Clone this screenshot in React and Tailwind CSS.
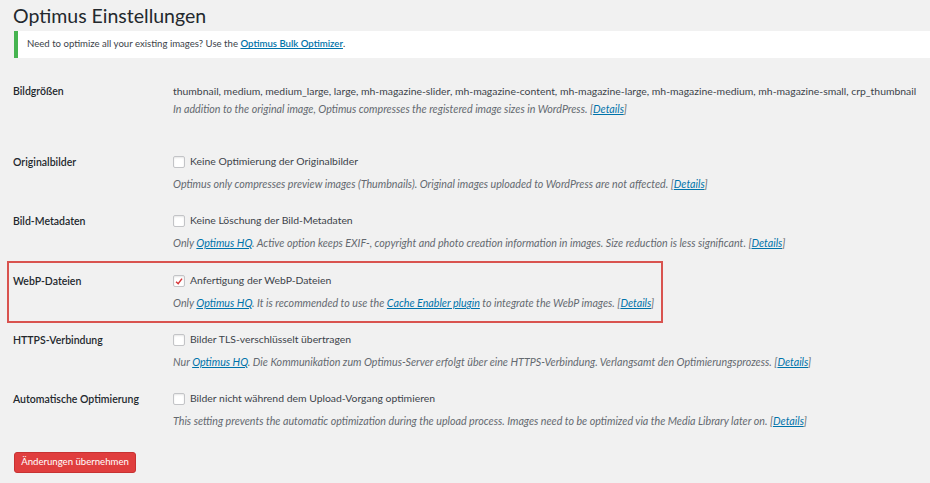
import React from 'react';

const font = { fontFamily: 'Lato, "Open Sans", Arial, sans-serif' };

function Link({ children }) {
    return <a className="text-[#0073aa] underline">{children}</a>;
}

function Details() {
    return (
        <span>
            [<Link>Details</Link>]
        </span>
    );
}

function Checkbox({ checked }) {
    return (
        <span className="w-[12px] h-[12px] bg-white border border-[#c3c4c7] rounded-[2px] shadow-[inset_0_1px_2px_rgba(0,0,0,0.1)] flex items-center justify-center shrink-0">
            {checked && (
                <svg viewBox="0 0 12 12" className="w-[11px] h-[11px]">
                    <path d="M2.5 6.2 L5 8.6 L9.6 2.6" fill="none" stroke="#d63638" strokeWidth="1.8" />
                </svg>
            )}
        </span>
    );
}

function Row({ label, children }) {
    return (
        <div className="flex">
            <div className="w-[160px] shrink-0 font-semibold text-[10.5px] text-[#23282d] leading-[18px]">{label}</div>
            <div className="flex-1">{children}</div>
        </div>
    );
}

function CheckRow({ label, text, checked, desc }) {
    return (
        <Row label={label}>
            <div className="flex items-center gap-[5px] h-[18px] text-[#3c434a]">
                <Checkbox checked={checked} />
                <span>{text}</span>
            </div>
            <p className="mt-[4px] leading-[18px] italic text-[10.7px] text-[#646970] whitespace-nowrap">{desc}</p>
        </Row>
    );
}

export default function App() {
    return (
        <div className="h-[483px] overflow-hidden bg-[#f1f1f1] pl-[13px] text-[10.4px]" style={font}>
            <h1 className="text-[19.5px] leading-[32px] text-[#23282d]">Optimus Einstellungen</h1>

            <div className="mt-[-1px] ml-[1px] h-[27px] bg-white border-l-4 border-[#46b450] flex items-center pl-[9px] text-[9.6px] text-[#3c434a]">
                Need to optimize all your existing images? Use the&nbsp;
                <a className="text-[#0073aa] underline font-semibold">Optimus Bulk Optimizer</a>.
            </div>

            <div className="mt-[24px]">
                <Row label="Bildgrößen">
                    <p className="leading-[18px] text-[#3c434a] whitespace-nowrap">
                        thumbnail, medium, medium_large, large, mh-magazine-slider, mh-magazine-content, mh-magazine-large, mh-magazine-medium, mh-magazine-small, crp_thumbnail
                    </p>
                    <p className="leading-[18px] italic text-[10.7px] text-[#646970]">
                        In addition to the original image, Optimus compresses the registered image sizes in WordPress. <Details />
                    </p>
                </Row>
            </div>

            <div className="mt-[35px]">
                <CheckRow
                    label="Originalbilder"
                    text="Keine Optimierung der Originalbilder"
                    desc={<>Optimus only compresses preview images (Thumbnails). Original images uploaded to WordPress are not affected. <Details /></>}
                />
            </div>

            <div className="mt-[19px]">
                <CheckRow
                    label="Bild-Metadaten"
                    text="Keine Löschung der Bild-Metadaten"
                    desc={<>Only <Link>Optimus HQ</Link>. Active option keeps EXIF-, copyright and photo creation information in images. Size reduction is less significant. <Details /></>}
                />
            </div>

            <div className="mt-[9px] ml-[-6px] w-[656px] border-2 border-[#d9534f] pl-[4px] py-[9px]">
                <CheckRow
                    label="WebP-Dateien"
                    text="Anfertigung der WebP-Dateien"
                    checked
                    desc={<>Only <Link>Optimus HQ</Link>. It is recommended to use the <Link>Cache Enabler plugin</Link> to integrate the WebP images. <Details /></>}
                />
            </div>

            <div className="mt-[8px]">
                <CheckRow
                    label="HTTPS-Verbindung"
                    text="Bilder TLS-verschlüsselt übertragen"
                    desc={<>Nur <Link>Optimus HQ</Link>. Die Kommunikation zum Optimus-Server erfolgt über eine HTTPS-Verbindung. Verlangsamt den Optimierungsprozess. <Details /></>}
                />
            </div>

            <div className="mt-[19px]">
                <CheckRow
                    label="Automatische Optimierung"
                    text="Bilder nicht während dem Upload-Vorgang optimieren"
                    desc={<>This setting prevents the automatic optimization during the upload process. Images need to be optimized via the Media Library later on. <Details /></>}
                />
            </div>

            <button className="mt-[22px] ml-[1px] h-[21px] w-[122px] bg-[#e03e3e] text-white text-[9.6px] rounded-[3px] border border-[#c73232] flex items-center justify-center">
                Änderungen übernehmen
            </button>
        </div>
    );
}
